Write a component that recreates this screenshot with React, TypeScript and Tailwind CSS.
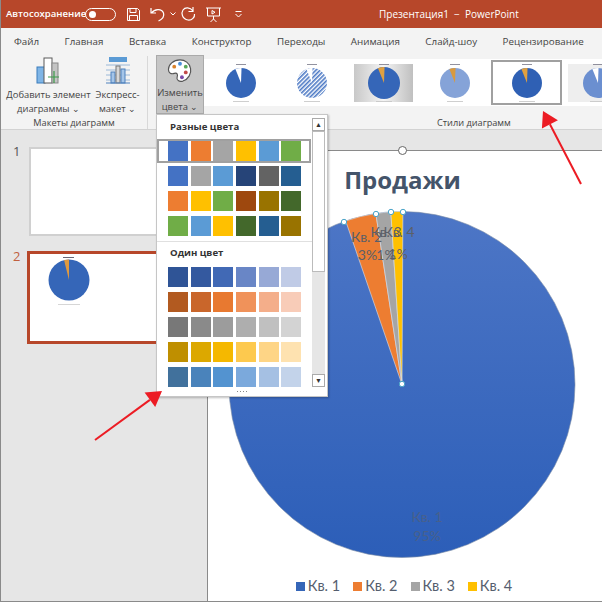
import React from "react";

const F = { fontFamily: '"Open Sans", "Noto Sans", sans-serif' };

function polar(cx: number, cy: number, r: number, a: number) {
  const t = ((a - 90) * Math.PI) / 180;
  return [cx + r * Math.cos(t), cy + r * Math.sin(t)];
}
function slice(cx: number, cy: number, r: number, a0: number, a1: number) {
  const [x0, y0] = polar(cx, cy, r, a0);
  const [x1, y1] = polar(cx, cy, r, a1);
  return `M${cx} ${cy}L${x0} ${y0}A${r} ${r} 0 0 1 ${x1} ${y1}Z`;
}

function MiniPie({ r = 15, color = "#3566b8", wedge = "#e0a040", white = false, stripes = false }: { r?: number; color?: string; wedge?: string; white?: boolean; stripes?: boolean }) {
  return (
    <svg width={44} height={44} viewBox="0 0 44 44">
      <rect x="17" y="3" width="10" height="0.800" fill="#778" />
      {stripes ? (
        <>
          <defs>
            <pattern id="hatch" width="3" height="3" patternUnits="userSpaceOnUse" patternTransform="rotate(-45)">
              <rect width="3" height="3" fill="#fff" />
              <rect width="3" height="1.600" fill="#4a78c4" />
            </pattern>
          </defs>
          <circle cx="22" cy="22" r={r} fill="url(#hatch)" />
        </>
      ) : (
        <circle cx="22" cy="22" r={r} fill={color} />
      )}
      <path d={slice(22, 22, r, -22, 2)} fill={white ? "#fff" : wedge} />
      <rect x="14" y="40" width="16" height="0.800" fill="#c4c4c4" />
    </svg>
  );
}

function Arrow({ className, x1, y1, x2, y2 }: { className: string; x1: number; y1: number; x2: number; y2: number }) {
  const a = Math.atan2(y2 - y1, x2 - x1);
  const l = 15;
  const w = 9;
  const bx = x2 - l * Math.cos(a);
  const by = y2 - l * Math.sin(a);
  const px = Math.sin(a) * w;
  const py = -Math.cos(a) * w;
  return (
    <svg className={className} width="602" height="602" viewBox="0 0 602 602">
      <line x1={x1} y1={y1} x2={bx} y2={by} stroke="#ec1c24" strokeWidth="2" />
      <path d={`M${x2} ${y2}L${bx + px} ${by + py}L${bx - px} ${by - py}Z`} fill="#ec1c24" />
    </svg>
  );
}

const multi = [
  ["#4472c4", "#ed7d31", "#a5a5a5", "#ffc000", "#5b9bd5", "#70ad47"],
  ["#4472c4", "#a5a5a5", "#5b9bd5", "#264478", "#636363", "#255e91"],
  ["#ed7d31", "#ffc000", "#70ad47", "#9e480e", "#997300", "#43682b"],
  ["#70ad47", "#5b9bd5", "#ffc000", "#43682b", "#255e91", "#997300"],
];
const mono = [
  ["#2f5496", "#34599f", "#4169b5", "#6986c6", "#97a9d6", "#c0cbe6"],
  ["#b25a20", "#c9662b", "#e87930", "#f0925a", "#f4ae8a", "#f8ccb8"],
  ["#787878", "#8a8a8a", "#9c9c9c", "#aeaeae", "#c0c0c0", "#d3d3d3"],
  ["#bf8f00", "#dca800", "#f5b800", "#fdc94e", "#fed586", "#fee2b0"],
  ["#41719c", "#4a83bb", "#5393d0", "#7ba9dc", "#a5c0e3", "#c3d3ea"],
];

function Swatches({ row, selected }: { row: string[]; selected?: boolean }) {
  return (
    <div className={`flex h-[24px] items-center gap-[2.670px] ${selected ? "-ml-[2px] border-2 border-[#a0a0a0] pl-[9px]" : "pl-[9px]"}`}>
      {row.map((c, i) => (
        <div key={i} className="h-[20px] w-[20px]" style={{ background: c }} />
      ))}
    </div>
  );
}

const tabs = ["Файл", "Главная", "Вставка", "Конструктор", "Переходы", "Анимация", "Слайд-шоу", "Рецензирование"];

function Slot({ children }: { children: React.ReactNode }) {
  return <div className="flex h-[47px] w-[71.500px] shrink-0 items-center justify-center">{children}</div>;
}

export default function App() {
  return (
    <div className="relative flex h-[602px] w-[602px] flex-col overflow-hidden border-b border-l border-[#8a8a8a] bg-[#e6e6e6] text-[#444]" style={F}>
      {/* Title bar */}
      <div className="flex h-[28px] shrink-0 items-center bg-[#b7472a] pl-[5px] text-white">
        <span className="w-[79px] whitespace-nowrap text-[9.600px] font-semibold">Автосохранение</span>
        <div className="flex h-[13px] w-[31px] items-center rounded-full border border-white pl-[3px]">
          <div className="h-[7px] w-[7px] rounded-full bg-white" />
        </div>
        <svg className="ml-[10px]" width="15" height="15" viewBox="0 0 15 15" fill="none" stroke="#fff" strokeWidth="1">
          <path d="M1.500 1.500h10l2 2v10h-12zM4 1.500v4h6v-4M3.500 13.500v-5h8v5" />
        </svg>
        <svg className="ml-[9px]" width="18" height="16" viewBox="0 0 18 16" fill="none" stroke="#fff" strokeWidth="1.200">
          <path d="M1 2v5h5M1.500 7c3-4 10-5 12 0 1 3-1 6-5 8" />
        </svg>
        <svg className="ml-[2px]" width="6" height="4" viewBox="0 0 6 4" fill="none" stroke="#fff"><path d="M.5.5 3 3 5.500.5" /></svg>
        <svg className="ml-[4px]" width="17" height="16" viewBox="0 0 17 16" fill="none" stroke="#fff" strokeWidth="1.200">
          <path d="M13 1v4.500h-4.500M13 5C10 1 5 1 3 4c-2 3-1 9 5 10 4 .5 7-3 6.500-6" />
        </svg>
        <svg className="ml-[8px]" width="17" height="17" viewBox="0 0 17 17" fill="none" stroke="#fff">
          <path d="M1 2h15M2.500 2v8h12V2M8.500 10v3M5.500 16l3-3 3 3M7 4.500v3.500l3-1.750z" />
        </svg>
        <svg className="ml-[12px]" width="9" height="7" viewBox="0 0 9 7" fill="none" stroke="#fff"><path d="M1.500.5h6M1.500 3 4.500 6l3-3" /></svg>
        <span className="ml-[136px] whitespace-nowrap text-[10px]">Презентация1&nbsp; −&nbsp; PowerPoint</span>
      </div>

      {/* Tabs */}
      <div className="flex h-[28px] shrink-0 items-center bg-[#f3f3f3] pl-[13px] text-[9.800px] text-[#444]">
        <div className="flex gap-[25.500px] whitespace-nowrap">
          {tabs.map((t) => (
            <span key={t}>{t}</span>
          ))}
        </div>
      </div>

      {/* Ribbon */}
      <div className="flex h-[74px] shrink-0 border-b border-[#d2d2d2] bg-[#f3f3f3]">
        <div className="flex w-[147px] shrink-0 flex-col items-center border-r border-[#d8d8d8]">
          <div className="flex h-[62px] gap-[3px] text-center text-[9.400px] leading-[13.500px]">
            <div className="flex w-[84px] flex-col items-center">
              <svg width="26" height="30" viewBox="0 0 26 30">
                <rect x="1" y="11" width="8" height="16" fill="#7fb5e6" stroke="#3a7dbc" />
                <rect x="8" y="2" width="8" height="25" fill="#fff" stroke="#5a5a5a" />
                <rect x="16" y="7" width="6" height="20" fill="#c4c4c4" stroke="#888" />
                <path d="M18 15v12M12 21h11" stroke="#3c9a4a" strokeWidth="1.200" />
              </svg>
              <span className="mt-[2px] whitespace-nowrap">Добавить элемент</span>
              <span>диаграммы ⌄</span>
            </div>
            <div className="flex w-[48px] flex-col items-center">
              <svg width="26" height="30" viewBox="0 0 26 30" fill="none">
                <rect x="4" y="1" width="18" height="5" fill="#5b9bd5" />
                <path d="M1 9h24M1 14h24M1 19h24M1 24h24" stroke="#9ab8d8" />
                <rect x="6" y="16" width="4" height="11" fill="#a5c5e8" stroke="#4f81bd" />
                <rect x="11" y="10" width="4" height="17" fill="#d8d8d8" stroke="#777" />
                <rect x="16" y="13" width="4" height="14" fill="#a5c5e8" stroke="#4f81bd" />
                <path d="M1 27h24" stroke="#4f81bd" />
              </svg>
              <span className="mt-[2px]">Экспресс-</span>
              <span>макет ⌄</span>
            </div>
          </div>
          <span className="text-[9.200px] leading-[13px]">Макеты диаграмм</span>
        </div>
        <div className="flex min-w-0 flex-1 flex-col pl-[8px]">
          <div className="flex h-[61px] items-start">
            <div className="flex h-[59px] w-[48px] shrink-0 -translate-y-[1px] flex-col items-center border border-[#aaa] bg-[#c6c6c6] text-center text-[9.400px] leading-[13.500px]">
              <svg className="mt-[2px]" width="26" height="26" viewBox="0 0 26 26">
                <path d="M13 2C6 2 1 7 1 12c0 4 3 5 6 4 3-1 4 1 3 4-1 3 2 5 6 4 6-2 9-8 8-13-1-6-6-9-11-9z" fill="#fff" stroke="#555" strokeWidth="1.200" />
                <circle cx="7" cy="9" r="2" fill="#d9822b" />
                <circle cx="13" cy="6" r="2" fill="#4a90d9" />
                <circle cx="19" cy="9" r="2" fill="#5aa85a" />
                <circle cx="19" cy="15" r="2" fill="#c24a4a" />
                <circle cx="15" cy="20" r="2" fill="#7a4aa8" />
              </svg>
              <span className="mt-[3px]">Изменить</span>
              <span>цвета ⌄</span>
            </div>
            <div className="mt-[3px] flex h-[47px] min-w-0 flex-1 items-center overflow-hidden bg-white pl-[1px]">
              <Slot><MiniPie white /></Slot>
              <Slot><MiniPie stripes white /></Slot>
              <Slot>
                <div className="flex h-[38px] w-[59px] items-center justify-center bg-gradient-to-r from-[#c8c8c8] via-[#f4f4f4] to-[#c0c0c0]"><MiniPie r={16} /></div>
              </Slot>
              <Slot><MiniPie color="#85a3d8" wedge="#d89a40" /></Slot>
              <Slot>
                <div className="flex h-[45px] w-[71px] items-center justify-center border-2 border-[#a0a0a0] bg-white"><MiniPie color="#2f60b4" /></div>
              </Slot>
              <Slot>
                <div className="flex h-[38px] w-[60px] items-center justify-center bg-[#eeeeee]"><MiniPie color="#6b8fd0" white /></div>
              </Slot>
            </div>
          </div>
          <span className="pl-[281px] text-[9.200px] leading-[13px]">Стили диаграмм</span>
        </div>
      </div>

      {/* Body */}
      <div className="flex min-h-0 flex-1">
        <div className="flex w-[206px] shrink-0 flex-col pt-[17px]">
          <div className="flex h-[91px] items-start pl-[12px]">
            <span className="-mt-[3px] w-[16px] text-[13px] leading-[14px] text-[#555]">1</span>
            <div className="h-[89px] w-[158px] border-2 border-[#d0d0d0] bg-white" />
          </div>
          <div className="mt-[13px] flex h-[93px] items-start pl-[12px]">
            <span className="-mt-[2px] w-[14px] text-[13px] leading-[14px] text-[#c0603f]">2</span>
            <div className="flex h-[93px] w-[159px] border-[3px] border-[#b7472a] bg-white pl-[18px] pt-[1px]">
              <svg width="44" height="52" viewBox="0 0 44 52">
                <rect x="15" y="2" width="11" height="1" fill="#667" />
                <circle cx="21" cy="25" r="20.500" fill="#3566b8" />
                <path d={slice(21, 25, 20.5, -14, 0)} fill="#e09a40" />
                <rect x="10" y="49" width="22" height="0.800" fill="#ccc" />
              </svg>
            </div>
          </div>
        </div>

        <div className="relative mt-[20px] flex min-w-0 flex-1 flex-col items-center border-l border-t border-[#8a8a8a] bg-white">
          <div className="absolute -top-[5px] left-[190px] h-[9px] w-[9px] rounded-full border border-[#666] bg-white" />
          <h1 className="mt-[12px] pr-[5px] text-[24px] font-bold leading-[34px] text-[#44546a]">Продажи</h1>
          <svg className="mt-[14px] shrink-0 overflow-visible" width="394" height="350" viewBox="0 0 394 350">
            <defs>
              <linearGradient id="pieFill" x1="0" y1="0" x2="0" y2="1">
                <stop offset="0" stopColor="#4d76c6" />
                <stop offset="1" stopColor="#2c5eb8" />
              </linearGradient>
            </defs>
            <circle cx="194" cy="173.500" r="173" fill="url(#pieFill)" stroke="#7b8ba5" strokeWidth="0.600" />
            <path d={slice(194, 173.5, 173, -19, -8.7)} fill="#ed7d31" stroke="#dce4f0" strokeWidth="0.600" />
            <path d={slice(194, 173.5, 173, -8.7, -3.7)} fill="#a5a5a5" stroke="#dce4f0" strokeWidth="0.600" />
            <path d={slice(194, 173.5, 173, -3.7, 0.3)} fill="#ffc000" stroke="#dce4f0" strokeWidth="0.600" />
            <g fontSize="14" fill="#5b5f68" fontFamily='"Lato", sans-serif' textAnchor="middle">
              <text x="158.500" y="31">Кв. 2</text>
              <text x="159.500" y="49">3%</text>
              <text x="178" y="26">Кв. 3</text>
              <text x="178" y="49">1%</text>
              <text x="191" y="26">Кв. 4</text>
              <text x="190" y="48">1%</text>
              <text x="219" y="311" fill="#47608c">Кв. 1</text>
              <text x="219" y="330" fill="#47608c">95%</text>
            </g>
            {[[136, 11], [168, 3], [183, 1], [195, 1], [194, 173]].map(([x, y], i) => (
              <circle key={i} cx={x} cy={y} r="2.700" fill="#fff" stroke="#4aa3c8" strokeWidth="1" />
            ))}
          </svg>
          <div className="mt-[16px] flex items-center gap-[13px] pr-[2px] text-[14.500px] leading-[18px] text-[#555e6e]" style={{ fontFamily: '"Lato", sans-serif' }}>
            {[["#3566b8", "Кв. 1"], ["#ed7d31", "Кв. 2"], ["#a5a5a5", "Кв. 3"], ["#ffc000", "Кв. 4"]].map(([c, t]) => (
              <span key={t} className="flex items-center gap-[3px]">
                <span className="h-[9px] w-[9px]" style={{ background: c }} />
                {t}
              </span>
            ))}
          </div>
        </div>
      </div>

      {/* Colour menu */}
      <div className="absolute left-[155px] top-[114px] flex h-[283px] w-[172px] flex-col border border-[#c6c6c6] bg-white shadow-[1px_1px_2px_rgba(0,0,0,0.25)]">
        <div className="flex min-h-0 flex-1">
          <div className="flex min-w-0 flex-1 flex-col">
            <div className="pl-[13px] pt-[4px] text-[9.600px] font-bold leading-[16px] text-[#333]">Разные цвета</div>
            <div className="mt-[4px] flex flex-col gap-[1px] pl-[2px] pr-[1px]">
              <Swatches row={multi[0]} selected />
              {multi.slice(1).map((r, i) => (
                <Swatches key={i} row={r} />
              ))}
            </div>
            <div className="mt-[3px] border-t border-[#e0e0e0] pl-[13px] pt-[3px] text-[9.600px] font-bold leading-[16px] text-[#333]">Один цвет</div>
            <div className="mt-[4px] flex flex-col gap-[1px] pl-[2px] pr-[1px]">
              {mono.map((r, i) => (
                <Swatches key={i} row={r} />
              ))}
            </div>
          </div>
          <div className="mr-[2px] mt-[3px] flex w-[13px] shrink-0 flex-col items-center bg-[#e6e6e6]">
            <div className="flex h-[13px] w-[13px] items-center justify-center border border-[#aaa] bg-white text-[7px] leading-none text-[#333]">▲</div>
            <div className="h-[141px] w-[13px] border border-[#bbb] bg-white" />
            <div className="mt-auto flex h-[13px] w-[13px] items-center justify-center border border-[#aaa] bg-white text-[7px] leading-none text-[#333]">▼</div>
          </div>
        </div>
        <div className="flex h-[9px] shrink-0 items-center justify-center gap-[2px]">
          {[0, 1, 2, 3].map((i) => (
            <span key={i} className="h-[1px] w-[1px] bg-[#888]" />
          ))}
        </div>
      </div>

      <Arrow className="pointer-events-none absolute -left-[1px] top-0" x1={581} y1={184} x2={543} y2={111} />
      <Arrow className="pointer-events-none absolute -left-[1px] top-0" x1={95} y1={440} x2={162} y2={391} />
    </div>
  );
}
